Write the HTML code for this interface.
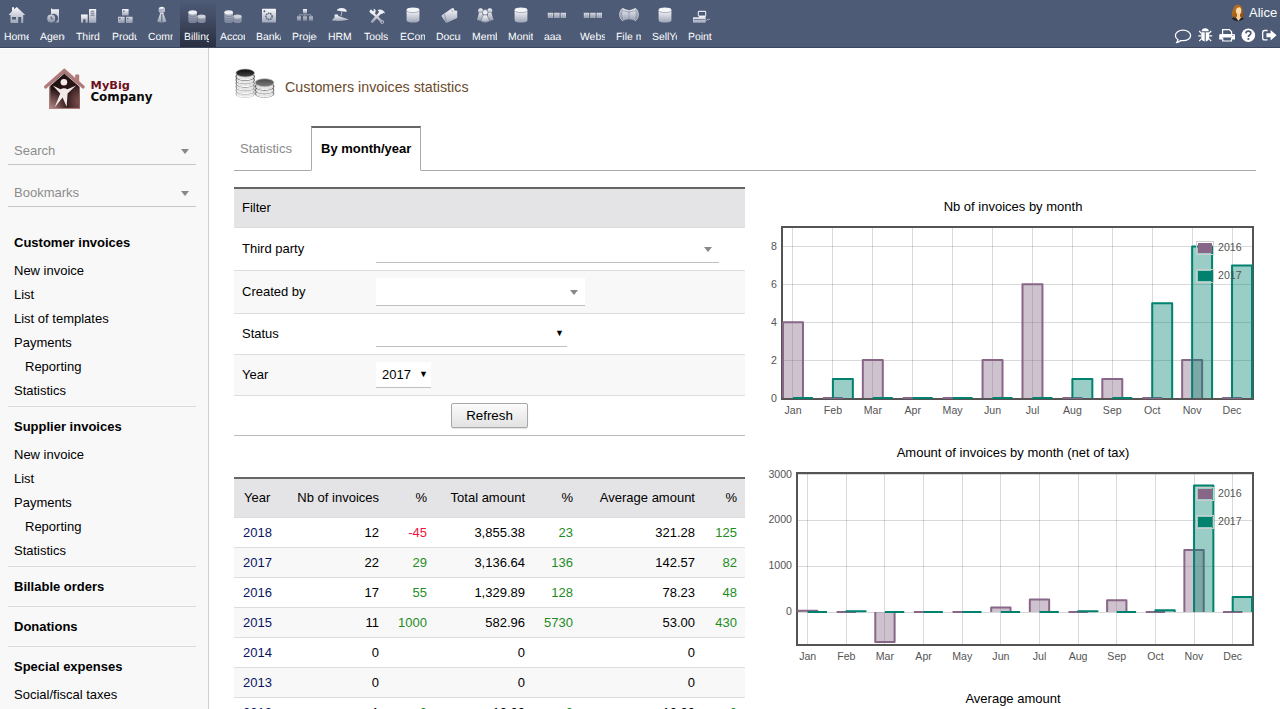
<!DOCTYPE html>
<html lang="en">
<head>
<meta charset="utf-8">
<title>Customers invoices statistics</title>
<style>
*{box-sizing:border-box}
html,body{margin:0;padding:0}
body{width:1280px;height:709px;overflow:hidden;background:#fff;font-family:"Liberation Sans",Arial,sans-serif;font-size:13px;color:#000;position:relative}
.abs{position:absolute}
#top{position:absolute;left:0;top:0;width:1280px;height:48px;background:#4d5b76;border-bottom:1px solid #3c465e;z-index:2}
#top .mi{position:absolute;top:0;height:47px;width:36px}
#top .mi.sel{background:linear-gradient(#4d5b76 0%,#434d66 35%,#2a2f41 100%)}
#top .mi span{position:absolute;left:4px;top:31px;width:25px;height:15px;overflow:hidden;white-space:nowrap;color:#fff;font-size:10.4px;line-height:14px;text-rendering:geometricPrecision}
#top .mi svg{position:absolute;left:0;top:0}
#user{position:absolute;left:1249px;top:5px;color:#fff;font-size:13px;line-height:16px}
#side{position:absolute;left:0;top:47px;width:209px;height:662px;background:#f8f8f8;border-right:1px solid #cfcfcf;box-shadow:inset 0 2px 0 #fff}
#side .sel{position:absolute;left:8px;width:188px;height:28px;border-bottom:1px solid #c6c6c6;color:#8c8c8c;font-size:13px;line-height:16px;padding:6px 0 0 6px}
#side .sel b{position:absolute;right:7px;top:12px;width:0;height:0;border-left:4px solid transparent;border-right:4px solid transparent;border-top:5px solid #888}
#side .m{position:absolute;font-size:13px;line-height:16px;white-space:nowrap;color:#000}
#side .t{font-weight:bold}
#side .hr{position:absolute;left:8px;width:188px;height:1px;background:#dcdcdc}
#logo{position:absolute;left:36px;top:14.8px}
#title{position:absolute;left:285px;top:77px;font-size:14.3px;line-height:20px;color:#6c4a2c;white-space:nowrap}
#tabline{position:absolute;left:234px;top:170px;width:1022px;height:1px;background:#aaa}
#tab1{position:absolute;left:240px;top:141px;color:#8a8a8a;line-height:16px}
#tab2{position:absolute;left:311px;top:126px;width:110px;height:45px;border:1px solid #aaa;border-top:2px solid #666;border-bottom:1px solid #fff;background:#fff;font-weight:bold;padding:13px 0 0 9px;line-height:16px}
#filter{position:absolute;left:234px;top:187px;width:511px;height:249px;border-top:2px solid #666;border-bottom:1px solid #bbb}
#filter .r{position:absolute;left:0;width:511px;border-top:1px solid #ddd}
#filter .r .l{position:absolute;left:8px;line-height:16px}
#filter .hd{background:#e4e4e6;border-top:0}
#filter .ev{background:#f8f8f8}
.ul{position:absolute;border-bottom:1px solid #c0c0c0}
.tri{position:absolute;width:0;height:0;border-left:4px solid transparent;border-right:4px solid transparent;border-top:5px solid #888}
#btn{position:absolute;left:451px;top:403px;width:77px;height:25px;border:1px solid #a8a8a8;border-radius:2px;background:linear-gradient(#fbfbfb,#e2e2e2);font-size:13.33px;line-height:16px;text-align:center;padding-top:4px;box-shadow:0 1px 1px rgba(0,0,0,.12)}
#stats{position:absolute;left:234px;top:477px;width:511px;border-collapse:collapse;border-top:2px solid #666;font-size:13px}
#stats th{height:39px;background:#e4e4e6;font-weight:normal;text-align:right;padding:0 8px 0 0;white-space:nowrap;border-bottom:1px solid #ddd}
#stats td{height:30px;text-align:right;padding:0 8px 0 0;border-bottom:1px solid #ddd;white-space:nowrap}
#stats tr.even td{background:#f8f8f8}
#stats .y{text-align:left;padding-left:9px;color:#0a1464}
#stats th.y{color:#000;padding-left:10px}
#stats .g{color:#1e8c1e}
#stats .r{color:#f0143c}
#stats td.c{padding-right:8px}
</style>
</head>
<body>
<svg width="0" height="0" style="position:absolute"><defs>
<linearGradient id="g" x1="0" y1="0" x2="0" y2="1"><stop offset="0" stop-color="#fbfbfc"/><stop offset="1" stop-color="#9ea5b8"/></linearGradient>
</defs></svg>
<div id="top">
<div class="mi" style="left:0px"><svg width="36" height="28" viewBox="0 0 36 28"><path d="M8.5 15 L12 11.3 V7.2 H14 V9.3 L16.8 7 L25.2 15 H23.2 V23 H21.2 V17 H18.2 V23 H10.5 V15 Z M12 17 V19.6 H16 V17 Z" fill="url(#g)" fill-rule="evenodd"/></svg><span>Home</span></div>
<div class="mi" style="left:36px"><svg width="36" height="28" viewBox="0 0 36 28"><path d="M51 8 L52.2 9.3 H59 V22.5 H54 A4.4 4.4 0 1 0 51 14.6 Z" transform="translate(-36 0)" fill="url(#g)"/><circle cx="15.2" cy="18.6" r="4" fill="url(#g)" opacity=".75"/><path d="M15.2 16.2 V18.8 H17.2" stroke="#5a6580" stroke-width="1" fill="none"/></svg><span>Agenda</span></div>
<div class="mi" style="left:72px"><svg width="36" height="28" viewBox="0 0 36 28"><path d="M9 14.5 H15.7 V22.8 H13.6 V19.3 H11.2 V22.8 H9 Z" fill="url(#g)"/><rect x="17" y="9" width="7.2" height="13.8" rx=".6" fill="url(#g)"/><path d="M18.6 11.2 H22.4 M18.6 13.2 H22.4 M18.6 15.2 H22.4" stroke="#69738c" stroke-width="1"/></svg><span>Third parties</span></div>
<div class="mi" style="left:108px"><svg width="36" height="28" viewBox="0 0 36 28"><rect x="14" y="9" width="6.6" height="6.6" rx=".5" fill="url(#g)"/><rect x="10" y="16.8" width="6.6" height="6.2" rx=".5" fill="url(#g)" opacity=".78"/><rect x="18" y="16.8" width="6.6" height="6.2" rx=".5" fill="url(#g)" opacity=".78"/><path d="M15 10.4h1.6v1.4h-1.6zM11 18h1.5v1.2h-1.5zM19 18h1.5v1.2h-1.5z" fill="#5d6883"/></svg><span>Products</span></div>
<div class="mi" style="left:144px"><svg width="36" height="28" viewBox="0 0 36 28"><circle cx="17.8" cy="10" r="3.2" fill="url(#g)"/><path d="M15 9.8 Q17.6 10.6 20.4 9" stroke="#7b849b" stroke-width=".7" fill="none"/><path d="M16.3 13 H19.3 L22.4 21.6 Q17.8 23.8 13.2 21.6 Z" fill="url(#g)" opacity=".85"/><path d="M17.8 14 V22.8" stroke="#5a6580" stroke-width="1.1"/></svg><span>Commercial</span></div>
<div class="mi sel" style="left:180px"><svg width="36" height="28" viewBox="0 0 36 28"><path d="M8.4 12.5 V21.2 A4.3 1.9 0 0 0 17 21.2 V12.5 Z" fill="url(#g)" opacity=".6"/><ellipse cx="12.7" cy="12.3" rx="4.3" ry="2.1" fill="#eceef2"/><path d="M8.6 15.2 A4.2 1.6 0 0 0 16.8 15.2 M8.6 17.6 A4.2 1.6 0 0 0 16.8 17.6 M8.6 20 A4.2 1.6 0 0 0 16.8 20" stroke="#6d7790" stroke-width=".7" fill="none"/><path d="M17.4 16.5 V21.3 A4.1 1.8 0 0 0 25.6 21.3 V16.5 Z" fill="url(#g)" opacity=".6"/><ellipse cx="21.5" cy="16.3" rx="4.1" ry="1.9" fill="#cfd2dc"/><path d="M17.6 19.2 A4 1.5 0 0 0 25.4 19.2" stroke="#6d7790" stroke-width=".7" fill="none"/></svg><span>Billing</span></div>
<div class="mi" style="left:216px"><svg width="36" height="28" viewBox="0 0 36 28"><path d="M8.4 12.5 V21.2 A4.3 1.9 0 0 0 17 21.2 V12.5 Z" fill="url(#g)" opacity=".6"/><ellipse cx="12.7" cy="12.3" rx="4.3" ry="2.1" fill="#eceef2"/><path d="M8.6 15.2 A4.2 1.6 0 0 0 16.8 15.2 M8.6 17.6 A4.2 1.6 0 0 0 16.8 17.6 M8.6 20 A4.2 1.6 0 0 0 16.8 20" stroke="#6d7790" stroke-width=".7" fill="none"/><path d="M17.4 16.5 V21.3 A4.1 1.8 0 0 0 25.6 21.3 V16.5 Z" fill="url(#g)" opacity=".6"/><ellipse cx="21.5" cy="16.3" rx="4.1" ry="1.9" fill="#cfd2dc"/><path d="M17.6 19.2 A4 1.5 0 0 0 25.4 19.2" stroke="#6d7790" stroke-width=".7" fill="none"/></svg><span>Accounting</span></div>
<div class="mi" style="left:252px"><svg width="36" height="28" viewBox="0 0 36 28"><rect x="10" y="8.7" width="14" height="13.9" rx=".6" fill="url(#g)"/><circle cx="17" cy="16.4" r="3.1" fill="none" stroke="#556079" stroke-width="1.5" stroke-dasharray="1.5 .7"/><path d="M11.4 11.2h2M12.4 10.2v2" stroke="#4f5a74" stroke-width=".9"/></svg><span>Bank/Cash</span></div>
<div class="mi" style="left:288px"><svg width="36" height="28" viewBox="0 0 36 28"><rect x="15" y="9" width="4" height="4.3" fill="url(#g)"/><rect x="9" y="16.3" width="4" height="4.4" fill="url(#g)" opacity=".62"/><rect x="15" y="16.3" width="4" height="4.4" fill="url(#g)" opacity=".62"/><rect x="21" y="16.3" width="4" height="4.4" fill="url(#g)" opacity=".62"/><path d="M17 13.3 V16.3 M11 16.3 V14.8 H23 V16.3" stroke="#8f97ab" stroke-width="1" fill="none"/></svg><span>Projects</span></div>
<div class="mi" style="left:324px"><svg width="36" height="28" viewBox="0 0 36 28"><path d="M12.8 10.5 Q13.5 8 17.6 8 Q22.3 8.3 23 11.6 Q18 11.8 12.8 10.5 Z" fill="#f0f1f4"/><path d="M17.8 11.5 L17 16" stroke="#b5bac8" stroke-width="1"/><path d="M8 20.3 L10.6 17.3 V14.6 H13.8 L14.4 16 L25 19.6 Q18 21.8 8 20.6 Z" fill="url(#g)"/></svg><span>HRM</span></div>
<div class="mi" style="left:360px"><svg width="36" height="28" viewBox="0 0 36 28"><path d="M12.4 12.6 L21.4 21.4" stroke="url(#g)" stroke-width="2.3" stroke-linecap="round"/><path d="M9.3 11.3 L11 9.3 L12.6 11 L14.2 10.4 L13.4 8.8 Q16.2 9.2 15.6 12.2 L13.8 14 Q10.4 14.8 9.3 11.3 Z" fill="#eef0f3"/><circle cx="22.2" cy="22" r="1.5" fill="none" stroke="#aeb4c4" stroke-width="1"/><path d="M20.6 12.4 L12.2 21.6" stroke="url(#g)" stroke-width="2.5" stroke-linecap="round"/><path d="M17.4 10.4 Q20.8 8.4 24.2 11.4 L25 13.6 L23.4 12.8 L22 14.2 L18.6 11.2 Z" fill="#f0f1f4"/></svg><span>Tools</span></div>
<div class="mi" style="left:396px"><svg width="36" height="28" viewBox="0 0 36 28"><path d="M10.6 10 V20.4 A6.4 2.1 0 0 0 23.4 20.4 V10 Z" fill="url(#g)"/><ellipse cx="17" cy="9.7" rx="6.4" ry="2.3" fill="#f4f5f7"/><path d="M10.7 10.6 A6.3 2 0 0 0 23.3 10.6" stroke="#7f88a0" stroke-width=".6" fill="none"/></svg><span>ECommerce</span></div>
<div class="mi" style="left:432px"><svg width="36" height="28" viewBox="0 0 36 28"><path d="M9.8 15.2 L19.6 8.6 L21.4 8 L22.4 10.4 L25.2 10.8 V18 L14.2 23 L9.6 16.6 Z" fill="url(#g)"/><path d="M12.5 14.2 L14.6 22.4 M19.6 9.6 L20.6 12" stroke="#7a849c" stroke-width=".7"/></svg><span>Documents</span></div>
<div class="mi" style="left:468px"><svg width="36" height="28" viewBox="0 0 36 28"><circle cx="12.6" cy="10.8" r="2.5" fill="url(#g)"/><path d="M11 13 H14.2 L16.2 19.8 Q12.4 21.6 9 19.8 Z" fill="url(#g)" opacity=".85"/><circle cx="21.8" cy="10.8" r="2.5" fill="url(#g)"/><path d="M20.2 13 H23.4 L25.6 19.8 Q22.2 21.6 18.6 19.8 Z" fill="url(#g)" opacity=".85"/><circle cx="17.2" cy="12.4" r="2.8" fill="#eceef2" stroke="#56617b" stroke-width=".6"/><path d="M15.4 15 H19 L21.8 21.2 Q17.2 23.6 12.6 21.2 Z" fill="url(#g)" stroke="#56617b" stroke-width=".5"/></svg><span>Members</span></div>
<div class="mi" style="left:504px"><svg width="36" height="28" viewBox="0 0 36 28"><path d="M10.6 10 V20.4 A6.4 2.1 0 0 0 23.4 20.4 V10 Z" fill="url(#g)"/><ellipse cx="17" cy="9.7" rx="6.4" ry="2.3" fill="#f4f5f7"/><path d="M10.7 10.6 A6.3 2 0 0 0 23.3 10.6" stroke="#7f88a0" stroke-width=".6" fill="none"/></svg><span>Monitoring</span></div>
<div class="mi" style="left:540px"><svg width="36" height="28" viewBox="0 0 36 28"><rect x="7.8" y="12.8" width="5.4" height="5.2" fill="url(#g)" opacity=".9"/><rect x="14.2" y="12.8" width="5.4" height="5.2" fill="url(#g)" opacity=".9"/><rect x="20.6" y="12.8" width="5.4" height="5.2" fill="url(#g)" opacity=".9"/><path d="M9.6 13.5v3.8M11.4 13.5v3.8M16 13.5v3.8M17.8 13.5v3.8M22.4 13.5v3.8M24.2 13.5v3.8" stroke="#8f97ab" stroke-width=".6"/></svg><span>aaa</span></div>
<div class="mi" style="left:576px"><svg width="36" height="28" viewBox="0 0 36 28"><rect x="7.8" y="12.8" width="5.4" height="5.2" fill="url(#g)" opacity=".9"/><rect x="14.2" y="12.8" width="5.4" height="5.2" fill="url(#g)" opacity=".9"/><rect x="20.6" y="12.8" width="5.4" height="5.2" fill="url(#g)" opacity=".9"/><path d="M9.6 13.5v3.8M11.4 13.5v3.8M16 13.5v3.8M17.8 13.5v3.8M22.4 13.5v3.8M24.2 13.5v3.8" stroke="#8f97ab" stroke-width=".6"/></svg><span>Websites</span></div>
<div class="mi" style="left:612px"><svg width="36" height="28" viewBox="0 0 36 28"><path d="M11 8 Q17 11.8 23 8 C27.5 10.5 27.5 18.5 23 21 Q17 17.4 11 21 C6.5 18.5 6.5 10.5 11 8 Z" fill="url(#g)" opacity=".62"/><path d="M11 8.4 Q17 12 23 8.4 Q24.4 14.5 23 20.6 Q17 17.2 11 20.6 Q9.6 14.5 11 8.4 Z" fill="url(#g)" opacity=".8"/><path d="M10.4 10.6 Q17 13.6 23.6 10.6 M17 10.4 V18.6" stroke="#76809a" stroke-width=".6" fill="none"/><path d="M11 8 C6.5 10.5 6.5 18.5 11 21 M23 8 C27.5 10.5 27.5 18.5 23 21" stroke="#dfe1e8" stroke-width=".7" fill="none"/></svg><span>File manager</span></div>
<div class="mi" style="left:648px"><svg width="36" height="28" viewBox="0 0 36 28"><path d="M10.6 10 V20.4 A6.4 2.1 0 0 0 23.4 20.4 V10 Z" fill="url(#g)"/><ellipse cx="17" cy="9.7" rx="6.4" ry="2.3" fill="#f4f5f7"/><path d="M10.7 10.6 A6.3 2 0 0 0 23.3 10.6" stroke="#7f88a0" stroke-width=".6" fill="none"/></svg><span>SellYourSaas</span></div>
<div class="mi" style="left:684px"><svg width="36" height="28" viewBox="0 0 36 28"><rect x="14.3" y="11.4" width="7.4" height="4.6" rx=".8" fill="none" stroke="#e3e5ea" stroke-width="1.1"/><path d="M9 17.3 H15 V16 H21.6 V22.8 H9 Z" fill="url(#g)"/><path d="M9.8 19.6 H20.8" stroke="#717b94" stroke-width="1"/><path d="M21.6 21.4 L23 19.6 L26 19.2" stroke="#aab0c0" stroke-width=".9" fill="none"/></svg><span>Point of sale</span></div>
<div id="user">Alice</div>
<svg class="abs" style="left:1229px;top:3px" width="18" height="20" viewBox="1229 3 18 20">
<defs><linearGradient id="hair" x1="0" y1="0" x2="1" y2="1"><stop offset="0" stop-color="#c77c22"/><stop offset="1" stop-color="#8a4a10"/></linearGradient></defs>
<path d="M1231.4 18.6 Q1233.6 16.8 1237.8 16.8 Q1242 16.8 1244.2 18.6 Q1241 21.4 1237.8 21.2 Q1234.6 21.4 1231.4 18.6 Z" fill="#23262c"/>
<path d="M1232.6 16.8 C1231 14 1232.6 11 1233.6 8.6 C1234.4 5.8 1236 4.8 1238 4.8 C1240.6 4.8 1242 6.4 1242.4 9 C1242.8 12 1244 14.4 1242.6 17.4 C1240 18.2 1235 18.2 1232.6 16.8 Z" fill="url(#hair)"/>
<ellipse cx="1238.6" cy="10.8" rx="2.7" ry="3.7" fill="#fcdcae"/>
<path d="M1237 13.6 H1240 V16.4 L1241.2 17.2 L1238.4 21 L1235.8 17.2 L1237 16.4 Z" fill="#f9cf98"/>
<path d="M1235.6 10 Q1236.4 7.4 1239.4 6.9 Q1237 5.8 1235.4 7.6 Q1234.6 9.4 1235.6 12 Z" fill="#b06a1a"/>
</svg>
<svg class="abs" style="left:1168px;top:24px" width="112" height="24" viewBox="1168 24 112 24">
<path d="M1183 30.1 C1187.3 30.1 1190.6 32.5 1190.6 35.4 C1190.6 38.4 1187.3 40.7 1183 40.7 C1182.2 40.7 1181.5 40.6 1180.8 40.5 C1179.6 41.7 1178 42.4 1176.4 42.6 C1177.3 41.8 1177.9 40.8 1178 39.6 C1176.4 38.6 1175.4 37.1 1175.4 35.4 C1175.4 32.5 1178.7 30.1 1183 30.1 Z" fill="none" stroke="#fff" stroke-width="1.25" stroke-linejoin="round"/>
<g fill="#fff" stroke="none">
<path d="M1201.6 31.2 C1201.6 29.4 1203.2 28.2 1205.2 28.2 C1207.2 28.2 1208.8 29.4 1208.8 31.2 Z"/>
<path d="M1201.3 32.3 H1204.7 V41.4 C1202.6 41.2 1201.3 39.4 1201.3 37.4 Z M1205.7 32.3 H1209.1 V37.4 C1209.1 39.4 1207.8 41.2 1205.7 41.4 Z"/>
</g>
<path d="M1201.3 33.4 L1199.2 31 M1209.1 33.4 L1211.2 31 M1201.3 35.9 H1198.3 M1209.1 35.9 H1212.2 M1201.6 38.6 L1199.2 41.2 M1208.8 38.6 L1211.2 41.2" stroke="#fff" stroke-width="1.2" fill="none"/>
<path d="M1222.6 34 V29.6 H1229.4 L1231.6 31.8 V34" fill="none" stroke="#fff" stroke-width="1.2"/>
<path d="M1220.6 34 H1233.6 Q1235 34 1235 35.4 V39.6 H1232 V37.6 H1222.2 V39.6 H1219.2 V35.4 Q1219.2 34 1220.6 34 Z" fill="#fff"/>
<path d="M1222.7 37.6 V41 H1231.5 V37.6" fill="none" stroke="#fff" stroke-width="1.2"/>
<circle cx="1233" cy="35.6" r=".6" fill="#4d5b76"/>
<circle cx="1248.3" cy="35.3" r="6.8" fill="#fff"/>
<path d="M1245.9 33.4 Q1246 31.2 1248.4 31.2 Q1250.8 31.2 1250.8 33.2 Q1250.8 34.4 1249.4 35.2 Q1248.4 35.8 1248.4 37" fill="none" stroke="#4d5b76" stroke-width="1.7"/>
<rect x="1247.5" y="38" width="1.8" height="1.9" fill="#4d5b76"/>
<path d="M1267.6 30.5 H1264.6 Q1262.7 30.5 1262.7 32.4 V38 Q1262.7 39.9 1264.6 39.9 H1267.6" fill="none" stroke="#fff" stroke-width="1.3"/>
<path d="M1266.4 33.2 H1270.6 V29.9 L1276.6 35.2 L1270.6 40.5 V37.2 H1266.4 Z" fill="#fff"/>
</svg>
</div>
<div id="side">
<svg id="logo" width="130" height="54" viewBox="36 62 130 54">
<defs><linearGradient id="hb" x1="0" y1="0" x2="1" y2="1"><stop offset="0" stop-color="#1a0d0d"/><stop offset=".55" stop-color="#2a1616"/><stop offset="1" stop-color="#3a1f1f"/></linearGradient>
<radialGradient id="hg" cx=".05" cy="1" r=".55"><stop offset="0" stop-color="#b98888"/><stop offset="1" stop-color="#b98888" stop-opacity="0"/></radialGradient>
<radialGradient id="hg2" cx="1" cy=".8" r=".45"><stop offset="0" stop-color="#7e4c4c"/><stop offset="1" stop-color="#8e5c5c" stop-opacity="0"/></radialGradient></defs>
<rect x="75.2" y="74.6" width="4" height="10" rx=".8" fill="#b07a7a"/>
<path d="M49.4 84 L64.3 71.6 L79.6 84 V108.8 H49.4 Z" fill="url(#hb)"/>
<path d="M49.4 84 L64.3 71.6 L79.6 84 V108.8 H49.4 Z" fill="url(#hg)"/>
<path d="M49.4 84 L64.3 71.6 L79.6 84 V108.8 H49.4 Z" fill="url(#hg2)"/>
<path d="M49.9 86 V108.4 H79.4" stroke="#b48282" stroke-width="1" fill="none"/>
<path d="M45.6 87 L64.3 70.4 L83.2 87" stroke="#b07a7a" stroke-width="3.2" fill="none" stroke-linecap="round" stroke-linejoin="miter"/>
<path d="M47.8 87.6 L64.3 73.2 L81 87.6" stroke="#f3eaea" stroke-width=".8" fill="none"/>
<circle cx="63.9" cy="82.3" r="3.3" fill="#f3e9e9"/>
<path d="M52.8 85.6 L60.5 89.2 Q64 87.4 67.5 89.2 L76 85.6 L67.6 93.6 L66.6 106.8 L62.6 97.5 L54.6 107.4 L60.2 93.4 Z" fill="#f3e9e9"/>
<text x="90.6" y="89.4" font-family="DejaVu Sans, sans-serif" font-weight="bold" font-size="11.35" fill="#6e0f1c">MyBig</text>
<text x="90.4" y="100.8" font-family="DejaVu Sans, sans-serif" font-weight="bold" font-size="11.9" fill="#0a0a0a">Company</text>
</svg>
<div class="sel" style="top:90px">Search<b></b></div>
<div class="sel" style="top:132px">Bookmarks<b></b></div>
<div class="m t" style="top:188px;left:14px">Customer invoices</div>
<div class="m" style="top:216px;left:14px">New invoice</div>
<div class="m" style="top:240px;left:14px">List</div>
<div class="m" style="top:264px;left:14px">List of templates</div>
<div class="m" style="top:288px;left:14px">Payments</div>
<div class="m" style="top:312px;left:25px">Reporting</div>
<div class="m" style="top:336px;left:14px">Statistics</div>
<div class="hr" style="top:359px"></div>
<div class="m t" style="top:372px;left:14px">Supplier invoices</div>
<div class="m" style="top:400px;left:14px">New invoice</div>
<div class="m" style="top:424px;left:14px">List</div>
<div class="m" style="top:448px;left:14px">Payments</div>
<div class="m" style="top:472px;left:25px">Reporting</div>
<div class="m" style="top:496px;left:14px">Statistics</div>
<div class="hr" style="top:519px"></div>
<div class="m t" style="top:532px;left:14px">Billable orders</div>
<div class="hr" style="top:559px"></div>
<div class="m t" style="top:572px;left:14px">Donations</div>
<div class="hr" style="top:599px"></div>
<div class="m t" style="top:612px;left:14px">Special expenses</div>
<div class="m" style="top:640px;left:14px">Social/fiscal taxes</div>
</div>
<svg class="abs" style="left:228px;top:62px;filter:blur(.4px)" width="56" height="42" viewBox="228 62 56 42"><linearGradient id="ck1" x1="0" y1="0" x2="0" y2="1"><stop offset="0" stop-color="#0a0a0a"/><stop offset="1" stop-color="#474747"/></linearGradient><ellipse cx="245.2" cy="93.70" rx="9.3" ry="3.7" fill="#e6e6e6" stroke="#000" stroke-opacity="0.20" stroke-width="1.3"/><path d="M237.0 94.90 A8.6 2.9 0 0 0 253.39999999999998 94.90" fill="none" stroke="#fff" stroke-width="1"/><ellipse cx="245.2" cy="90.25" rx="9.3" ry="3.7" fill="#e6e6e6" stroke="#000" stroke-opacity="0.27" stroke-width="1.3"/><path d="M237.0 91.45 A8.6 2.9 0 0 0 253.39999999999998 91.45" fill="none" stroke="#fff" stroke-width="1"/><ellipse cx="245.2" cy="86.80" rx="9.3" ry="3.7" fill="#e6e6e6" stroke="#000" stroke-opacity="0.34" stroke-width="1.3"/><path d="M237.0 88.00 A8.6 2.9 0 0 0 253.39999999999998 88.00" fill="none" stroke="#fff" stroke-width="1"/><ellipse cx="245.2" cy="83.35" rx="9.3" ry="3.7" fill="#e6e6e6" stroke="#000" stroke-opacity="0.41" stroke-width="1.3"/><path d="M237.0 84.55 A8.6 2.9 0 0 0 253.39999999999998 84.55" fill="none" stroke="#fff" stroke-width="1"/><ellipse cx="245.2" cy="79.90" rx="9.3" ry="3.7" fill="#e6e6e6" stroke="#000" stroke-opacity="0.48" stroke-width="1.3"/><path d="M237.0 81.10 A8.6 2.9 0 0 0 253.39999999999998 81.10" fill="none" stroke="#fff" stroke-width="1"/><ellipse cx="245.2" cy="76.45" rx="9.3" ry="3.7" fill="#e6e6e6" stroke="#000" stroke-opacity="0.55" stroke-width="1.3"/><path d="M237.0 77.65 A8.6 2.9 0 0 0 253.39999999999998 77.65" fill="none" stroke="#fff" stroke-width="1"/><ellipse cx="245.2" cy="73" rx="9.4" ry="4" fill="url(#ck1)" stroke="#c4c4c4" stroke-width=".7"/><linearGradient id="ck2" x1="0" y1="0" x2="0" y2="1"><stop offset="0" stop-color="#484848"/><stop offset="1" stop-color="#7c7c7c"/></linearGradient><ellipse cx="264.6" cy="93.50" rx="9.3" ry="3.7" fill="#e6e6e6" stroke="#000" stroke-opacity="0.41" stroke-width="1.3"/><path d="M256.40000000000003 94.70 A8.6 2.9 0 0 0 272.8 94.70" fill="none" stroke="#fff" stroke-width="1"/><ellipse cx="264.6" cy="89.90" rx="9.3" ry="3.7" fill="#e6e6e6" stroke="#000" stroke-opacity="0.48" stroke-width="1.3"/><path d="M256.40000000000003 91.10 A8.6 2.9 0 0 0 272.8 91.10" fill="none" stroke="#fff" stroke-width="1"/><ellipse cx="264.6" cy="86.30" rx="9.3" ry="3.7" fill="#e6e6e6" stroke="#000" stroke-opacity="0.55" stroke-width="1.3"/><path d="M256.40000000000003 87.50 A8.6 2.9 0 0 0 272.8 87.50" fill="none" stroke="#fff" stroke-width="1"/><ellipse cx="264.6" cy="82.7" rx="9.4" ry="4" fill="url(#ck2)" stroke="#c4c4c4" stroke-width=".7"/></svg>
<div id="title">Customers invoices statistics</div>
<div id="tabline"></div>
<div id="tab1">Statistics</div>
<div id="tab2">By month/year</div>
<div id="filter">
<div class="r hd" style="top:0;height:38px"><span class="l" style="top:11px">Filter</span></div>
<div class="r" style="top:38px;height:43px"><span class="l" style="top:13px">Third party</span></div>
<div class="r ev" style="top:81px;height:43px"><span class="l" style="top:13px">Created by</span></div>
<div class="r" style="top:124px;height:41px"><span class="l" style="top:12px">Status</span></div>
<div class="r ev" style="top:165px;height:41px"><span class="l" style="top:12px">Year</span></div>
<div class="r" style="top:206px;height:40px"></div>
</div>
<div class="ul" style="left:376px;top:236px;width:343px;height:27px"></div><div class="tri" style="left:704px;top:247px"></div>
<div class="ul" style="left:376px;top:278px;width:209px;height:28px;background:#fff"></div><div class="tri" style="left:570px;top:290px"></div>
<div class="ul" style="left:376px;top:320px;width:191px;height:27px"></div><div class="abs" style="left:555px;top:326px;font-size:9px;line-height:14px">&#9660;</div>
<div class="ul" style="left:376px;top:362px;width:55px;height:26px;background:#fff;padding:5px 0 0 6px;line-height:16px">2017</div><div class="abs" style="left:419px;top:367px;font-size:9px;line-height:14px">&#9660;</div>
<div id="btn">Refresh</div>
<table id="stats">
<tr><th class="y" style="width:58px">Year</th><th style="width:95px">Nb of invoices</th><th style="width:48px">%</th><th style="width:98px">Total amount</th><th style="width:48px">%</th><th style="width:122px">Average amount</th><th style="width:42px">%</th></tr>
<tr class="odd"><td class="y">2018</td><td>12</td><td class="r">-45</td><td>3,855.38</td><td class="g">23</td><td>321.28</td><td class="g">125</td></tr>
<tr class="even"><td class="y">2017</td><td>22</td><td class="g">29</td><td>3,136.64</td><td class="g">136</td><td>142.57</td><td class="g">82</td></tr>
<tr class="odd"><td class="y">2016</td><td>17</td><td class="g">55</td><td>1,329.89</td><td class="g">128</td><td>78.23</td><td class="g">48</td></tr>
<tr class="even"><td class="y">2015</td><td>11</td><td class="g">1000</td><td>582.96</td><td class="g">5730</td><td>53.00</td><td class="g">430</td></tr>
<tr class="odd"><td class="y">2014</td><td class="c">0</td><td></td><td class="c">0</td><td></td><td class="c">0</td><td></td></tr>
<tr class="even"><td class="y">2013</td><td class="c">0</td><td></td><td class="c">0</td><td></td><td class="c">0</td><td></td></tr>
<tr class="odd"><td class="y">2012</td><td>1</td><td class="g">0</td><td>10.00</td><td class="g">0</td><td>10.00</td><td class="g">0</td></tr>
</table>
<svg class="abs" style="left:760px;top:190px" width="520" height="240" viewBox="760 190 520 240" font-family="Liberation Sans, Arial, sans-serif">
<text x="1013" y="211" text-anchor="middle" font-size="13" fill="#000">Nb of invoices by month</text>
<path d="M792.5 228 V398 M832.5 228 V398 M872.5 228 V398 M912.5 228 V398 M952.5 228 V398 M992.5 228 V398 M1032.5 228 V398 M1072.5 228 V398 M1112.5 228 V398 M1152.5 228 V398 M1192.5 228 V398 M1232.5 228 V398 M783 398.5 H1252 M783 360.5 H1252 M783 322.5 H1252 M783 284.5 H1252 M783 246.5 H1252" stroke="#545454" stroke-opacity=".22" stroke-width="1" fill="none"/>
<rect x="782" y="227" width="471" height="172" fill="none" stroke="#545454" stroke-width="2"/>
<rect x="783.00" y="322.24" width="19.96" height="75.76" fill="#886688" fill-opacity=".4"/>
<path d="M783.00 398.00 V322.24 H802.96 V398.00" stroke="#886688" stroke-width="2" fill="none" stroke-linejoin="round"/>
<path d="M822.91 398.00 V398.00 H842.87 V398.00" stroke="#886688" stroke-width="2" fill="none" stroke-linejoin="round"/>
<rect x="862.83" y="360.12" width="19.96" height="37.88" fill="#886688" fill-opacity=".4"/>
<path d="M862.83 398.00 V360.12 H882.79 V398.00" stroke="#886688" stroke-width="2" fill="none" stroke-linejoin="round"/>
<path d="M902.74 398.00 V398.00 H922.70 V398.00" stroke="#886688" stroke-width="2" fill="none" stroke-linejoin="round"/>
<path d="M942.66 398.00 V398.00 H962.62 V398.00" stroke="#886688" stroke-width="2" fill="none" stroke-linejoin="round"/>
<rect x="982.57" y="360.12" width="19.96" height="37.88" fill="#886688" fill-opacity=".4"/>
<path d="M982.57 398.00 V360.12 H1002.53 V398.00" stroke="#886688" stroke-width="2" fill="none" stroke-linejoin="round"/>
<rect x="1022.49" y="284.36" width="19.96" height="113.64" fill="#886688" fill-opacity=".4"/>
<path d="M1022.49 398.00 V284.36 H1042.45 V398.00" stroke="#886688" stroke-width="2" fill="none" stroke-linejoin="round"/>
<path d="M1062.40 398.00 V398.00 H1082.36 V398.00" stroke="#886688" stroke-width="2" fill="none" stroke-linejoin="round"/>
<rect x="1102.32" y="379.06" width="19.96" height="18.94" fill="#886688" fill-opacity=".4"/>
<path d="M1102.32 398.00 V379.06 H1122.28 V398.00" stroke="#886688" stroke-width="2" fill="none" stroke-linejoin="round"/>
<path d="M1142.23 398.00 V398.00 H1162.19 V398.00" stroke="#886688" stroke-width="2" fill="none" stroke-linejoin="round"/>
<rect x="1182.15" y="360.12" width="19.96" height="37.88" fill="#886688" fill-opacity=".4"/>
<path d="M1182.15 398.00 V360.12 H1202.11 V398.00" stroke="#886688" stroke-width="2" fill="none" stroke-linejoin="round"/>
<path d="M1222.06 398.00 V398.00 H1242.02 V398.00" stroke="#886688" stroke-width="2" fill="none" stroke-linejoin="round"/>
<path d="M792.98 398.00 V398.00 H812.94 V398.00" stroke="#00826e" stroke-width="2" fill="none" stroke-linejoin="round"/>
<rect x="832.89" y="379.06" width="19.96" height="18.94" fill="#00826e" fill-opacity=".4"/>
<path d="M832.89 398.00 V379.06 H852.85 V398.00" stroke="#00826e" stroke-width="2" fill="none" stroke-linejoin="round"/>
<path d="M872.81 398.00 V398.00 H892.77 V398.00" stroke="#00826e" stroke-width="2" fill="none" stroke-linejoin="round"/>
<path d="M912.72 398.00 V398.00 H932.68 V398.00" stroke="#00826e" stroke-width="2" fill="none" stroke-linejoin="round"/>
<path d="M952.64 398.00 V398.00 H972.60 V398.00" stroke="#00826e" stroke-width="2" fill="none" stroke-linejoin="round"/>
<path d="M992.55 398.00 V398.00 H1012.51 V398.00" stroke="#00826e" stroke-width="2" fill="none" stroke-linejoin="round"/>
<path d="M1032.47 398.00 V398.00 H1052.43 V398.00" stroke="#00826e" stroke-width="2" fill="none" stroke-linejoin="round"/>
<rect x="1072.38" y="379.06" width="19.96" height="18.94" fill="#00826e" fill-opacity=".4"/>
<path d="M1072.38 398.00 V379.06 H1092.34 V398.00" stroke="#00826e" stroke-width="2" fill="none" stroke-linejoin="round"/>
<path d="M1112.30 398.00 V398.00 H1132.26 V398.00" stroke="#00826e" stroke-width="2" fill="none" stroke-linejoin="round"/>
<rect x="1152.21" y="303.30" width="19.96" height="94.70" fill="#00826e" fill-opacity=".4"/>
<path d="M1152.21 398.00 V303.30 H1172.17 V398.00" stroke="#00826e" stroke-width="2" fill="none" stroke-linejoin="round"/>
<rect x="1192.13" y="246.48" width="19.96" height="151.52" fill="#00826e" fill-opacity=".4"/>
<path d="M1192.13 398.00 V246.48 H1212.09 V398.00" stroke="#00826e" stroke-width="2" fill="none" stroke-linejoin="round"/>
<rect x="1232.04" y="265.42" width="19.96" height="132.58" fill="#00826e" fill-opacity=".4"/>
<path d="M1232.04 398.00 V265.42 H1252.00 V398.00" stroke="#00826e" stroke-width="2" fill="none" stroke-linejoin="round"/>
<text x="793.0" y="414" text-anchor="middle" font-size="10.6" fill="#545454">Jan</text>
<text x="832.9" y="414" text-anchor="middle" font-size="10.6" fill="#545454">Feb</text>
<text x="872.8" y="414" text-anchor="middle" font-size="10.6" fill="#545454">Mar</text>
<text x="912.7" y="414" text-anchor="middle" font-size="10.6" fill="#545454">Apr</text>
<text x="952.6" y="414" text-anchor="middle" font-size="10.6" fill="#545454">May</text>
<text x="992.6" y="414" text-anchor="middle" font-size="10.6" fill="#545454">Jun</text>
<text x="1032.5" y="414" text-anchor="middle" font-size="10.6" fill="#545454">Jul</text>
<text x="1072.4" y="414" text-anchor="middle" font-size="10.6" fill="#545454">Aug</text>
<text x="1112.3" y="414" text-anchor="middle" font-size="10.6" fill="#545454">Sep</text>
<text x="1152.2" y="414" text-anchor="middle" font-size="10.6" fill="#545454">Oct</text>
<text x="1192.1" y="414" text-anchor="middle" font-size="10.6" fill="#545454">Nov</text>
<text x="1232.0" y="414" text-anchor="middle" font-size="10.6" fill="#545454">Dec</text>
<text x="777" y="401.8" text-anchor="end" font-size="10.6" fill="#545454">0</text>
<text x="777" y="363.9" text-anchor="end" font-size="10.6" fill="#545454">2</text>
<text x="777" y="326.0" text-anchor="end" font-size="10.6" fill="#545454">4</text>
<text x="777" y="288.2" text-anchor="end" font-size="10.6" fill="#545454">6</text>
<text x="777" y="249.7" text-anchor="end" font-size="10.6" fill="#545454">8</text>
<rect x="1196.5" y="241.5" width="17" height="13" fill="none" stroke="#ccc" stroke-width="1"/>
<rect x="1198" y="243" width="14" height="10" fill="#886688"/>
<text x="1218" y="251.2" font-size="10.6" fill="#545454">2016</text>
<rect x="1196.5" y="269.5" width="17" height="13" fill="none" stroke="#ccc" stroke-width="1"/>
<rect x="1198" y="271" width="14" height="10" fill="#00826e"/>
<text x="1218" y="279.2" font-size="10.6" fill="#545454">2017</text>
</svg>
<svg class="abs" style="left:760px;top:432px" width="520" height="240" viewBox="760 432 520 240" font-family="Liberation Sans, Arial, sans-serif">
<text x="1013" y="457" text-anchor="middle" font-size="13" fill="#000">Amount of invoices by month (net of tax)</text>
<path d="M807.5 474 V644 M846.5 474 V644 M884.5 474 V644 M923.5 474 V644 M962.5 474 V644 M1000.5 474 V644 M1039.5 474 V644 M1078.5 474 V644 M1116.5 474 V644 M1155.5 474 V644 M1194.5 474 V644 M1232.5 474 V644 M798 612.5 H1252 M798 566.5 H1252 M798 520.5 H1252 M798 474.5 H1252" stroke="#545454" stroke-opacity=".22" stroke-width="1" fill="none"/>
<rect x="797" y="473" width="456" height="172" fill="none" stroke="#545454" stroke-width="2"/>
<rect x="798.00" y="610.80" width="19.32" height="1.20" fill="#886688" fill-opacity=".4"/>
<path d="M798.00 612.00 V610.80 H817.32 V612.00" stroke="#886688" stroke-width="2" fill="none" stroke-linejoin="round"/>
<path d="M836.64 612.00 V612.00 H855.96 V612.00" stroke="#886688" stroke-width="2" fill="none" stroke-linejoin="round"/>
<rect x="875.28" y="612.00" width="19.32" height="29.90" fill="#886688" fill-opacity=".4"/>
<path d="M875.28 612.00 V641.90 H894.60 V612.00" stroke="#886688" stroke-width="2" fill="none" stroke-linejoin="round"/>
<path d="M913.91 612.00 V612.00 H933.23 V612.00" stroke="#886688" stroke-width="2" fill="none" stroke-linejoin="round"/>
<path d="M952.55 612.00 V612.00 H971.87 V612.00" stroke="#886688" stroke-width="2" fill="none" stroke-linejoin="round"/>
<rect x="991.19" y="607.40" width="19.32" height="4.60" fill="#886688" fill-opacity=".4"/>
<path d="M991.19 612.00 V607.40 H1010.51 V612.00" stroke="#886688" stroke-width="2" fill="none" stroke-linejoin="round"/>
<rect x="1029.83" y="599.49" width="19.32" height="12.51" fill="#886688" fill-opacity=".4"/>
<path d="M1029.83 612.00 V599.49 H1049.15 V612.00" stroke="#886688" stroke-width="2" fill="none" stroke-linejoin="round"/>
<path d="M1068.47 612.00 V612.00 H1087.79 V612.00" stroke="#886688" stroke-width="2" fill="none" stroke-linejoin="round"/>
<rect x="1107.11" y="600.18" width="19.32" height="11.82" fill="#886688" fill-opacity=".4"/>
<path d="M1107.11 612.00 V600.18 H1126.43 V612.00" stroke="#886688" stroke-width="2" fill="none" stroke-linejoin="round"/>
<path d="M1145.74 612.00 V612.00 H1165.06 V612.00" stroke="#886688" stroke-width="2" fill="none" stroke-linejoin="round"/>
<rect x="1184.38" y="549.99" width="19.32" height="62.01" fill="#886688" fill-opacity=".4"/>
<path d="M1184.38 612.00 V549.99 H1203.70 V612.00" stroke="#886688" stroke-width="2" fill="none" stroke-linejoin="round"/>
<path d="M1223.02 612.00 V612.00 H1242.34 V612.00" stroke="#886688" stroke-width="2" fill="none" stroke-linejoin="round"/>
<path d="M807.66 612.00 V612.00 H826.98 V612.00" stroke="#00826e" stroke-width="2" fill="none" stroke-linejoin="round"/>
<rect x="846.30" y="611.31" width="19.32" height="0.69" fill="#00826e" fill-opacity=".4"/>
<path d="M846.30 612.00 V611.31 H865.62 V612.00" stroke="#00826e" stroke-width="2" fill="none" stroke-linejoin="round"/>
<path d="M884.94 612.00 V612.00 H904.26 V612.00" stroke="#00826e" stroke-width="2" fill="none" stroke-linejoin="round"/>
<path d="M923.57 612.00 V612.00 H942.89 V612.00" stroke="#00826e" stroke-width="2" fill="none" stroke-linejoin="round"/>
<path d="M962.21 612.00 V612.00 H981.53 V612.00" stroke="#00826e" stroke-width="2" fill="none" stroke-linejoin="round"/>
<path d="M1000.85 612.00 V612.00 H1020.17 V612.00" stroke="#00826e" stroke-width="2" fill="none" stroke-linejoin="round"/>
<path d="M1039.49 612.00 V612.00 H1058.81 V612.00" stroke="#00826e" stroke-width="2" fill="none" stroke-linejoin="round"/>
<rect x="1078.13" y="611.31" width="19.32" height="0.69" fill="#00826e" fill-opacity=".4"/>
<path d="M1078.13 612.00 V611.31 H1097.45 V612.00" stroke="#00826e" stroke-width="2" fill="none" stroke-linejoin="round"/>
<path d="M1116.77 612.00 V612.00 H1136.09 V612.00" stroke="#00826e" stroke-width="2" fill="none" stroke-linejoin="round"/>
<rect x="1155.40" y="610.16" width="19.32" height="1.84" fill="#00826e" fill-opacity=".4"/>
<path d="M1155.40 612.00 V610.16 H1174.72 V612.00" stroke="#00826e" stroke-width="2" fill="none" stroke-linejoin="round"/>
<rect x="1194.04" y="485.50" width="19.32" height="126.50" fill="#00826e" fill-opacity=".4"/>
<path d="M1194.04 612.00 V485.50 H1213.36 V612.00" stroke="#00826e" stroke-width="2" fill="none" stroke-linejoin="round"/>
<rect x="1232.68" y="597.00" width="19.32" height="15.00" fill="#00826e" fill-opacity=".4"/>
<path d="M1232.68 612.00 V597.00 H1252.00 V612.00" stroke="#00826e" stroke-width="2" fill="none" stroke-linejoin="round"/>
<text x="807.7" y="660" text-anchor="middle" font-size="10.6" fill="#545454">Jan</text>
<text x="846.3" y="660" text-anchor="middle" font-size="10.6" fill="#545454">Feb</text>
<text x="884.9" y="660" text-anchor="middle" font-size="10.6" fill="#545454">Mar</text>
<text x="923.6" y="660" text-anchor="middle" font-size="10.6" fill="#545454">Apr</text>
<text x="962.2" y="660" text-anchor="middle" font-size="10.6" fill="#545454">May</text>
<text x="1000.9" y="660" text-anchor="middle" font-size="10.6" fill="#545454">Jun</text>
<text x="1039.5" y="660" text-anchor="middle" font-size="10.6" fill="#545454">Jul</text>
<text x="1078.1" y="660" text-anchor="middle" font-size="10.6" fill="#545454">Aug</text>
<text x="1116.8" y="660" text-anchor="middle" font-size="10.6" fill="#545454">Sep</text>
<text x="1155.4" y="660" text-anchor="middle" font-size="10.6" fill="#545454">Oct</text>
<text x="1194.0" y="660" text-anchor="middle" font-size="10.6" fill="#545454">Nov</text>
<text x="1232.7" y="660" text-anchor="middle" font-size="10.6" fill="#545454">Dec</text>
<text x="792" y="615.0" text-anchor="end" font-size="10.6" fill="#545454">0</text>
<text x="792" y="569.0" text-anchor="end" font-size="10.6" fill="#545454">1000</text>
<text x="792" y="523.0" text-anchor="end" font-size="10.6" fill="#545454">2000</text>
<text x="792" y="477.8" text-anchor="end" font-size="10.6" fill="#545454">3000</text>
<rect x="1196.5" y="487.5" width="17" height="13" fill="none" stroke="#ccc" stroke-width="1"/>
<rect x="1198" y="489" width="14" height="10" fill="#886688"/>
<text x="1218" y="497.2" font-size="10.6" fill="#545454">2016</text>
<rect x="1196.5" y="515.5" width="17" height="13" fill="none" stroke="#ccc" stroke-width="1"/>
<rect x="1198" y="517" width="14" height="10" fill="#00826e"/>
<text x="1218" y="525.2" font-size="10.6" fill="#545454">2017</text>
</svg>
<div class="abs" style="left:913px;top:691px;width:200px;text-align:center;line-height:16px">Average amount</div>
</body>
</html>
